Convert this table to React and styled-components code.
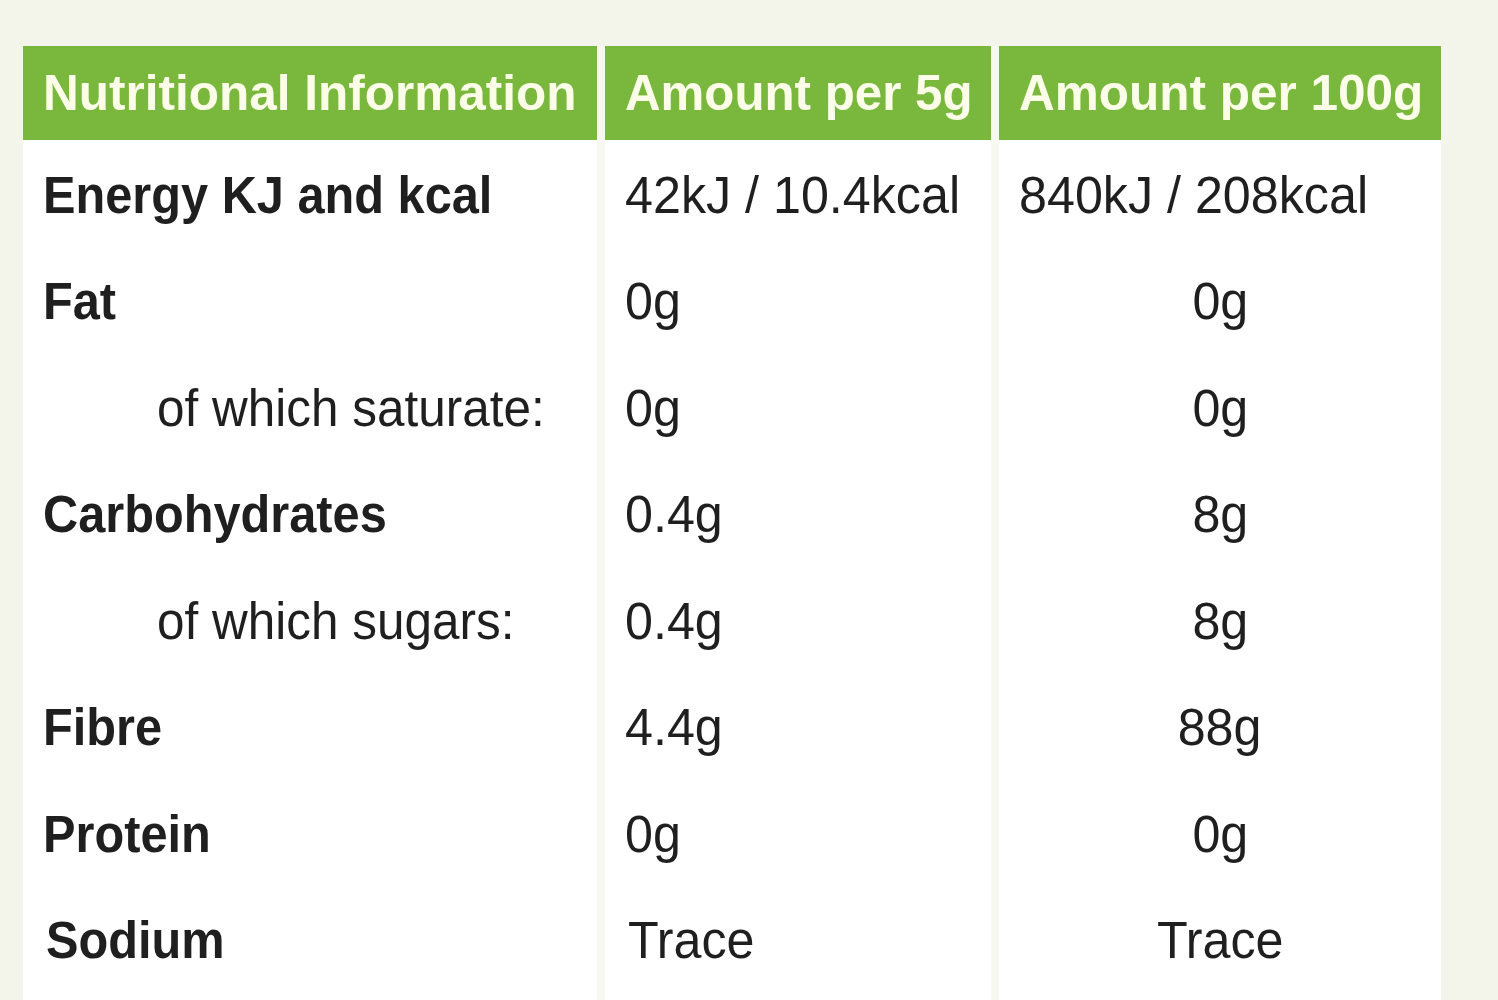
import React from "react";
import styled, { createGlobalStyle } from "styled-components";

const GlobalStyle = createGlobalStyle`
  html, body {
    margin: 0;
    padding: 0;
    background: #f3f4ea;
  }
  body {
    font-family: "Liberation Sans", Arial, sans-serif;
  }
`;

const Page = styled.div`
  width: 1498px;
  height: 1000px;
  overflow: hidden;
  padding: 46px 0 0 23px;
  box-sizing: border-box;
`;

const Table = styled.div`
  display: grid;
  grid-template-columns: 574px 386px 442px;
  grid-template-rows: 94px repeat(8, 106.5px) 40px;
  column-gap: 8px;
  width: 1418px;
  background: #f7f8f1;
`;

const HeadCell = styled.div`
  background: #7ab83d;
  color: #fbfde8;
  font-weight: 700;
  font-size: 50px;
  display: flex;
  align-items: center;
  padding-left: 20px;
  white-space: nowrap;
`;

const Cell = styled.div`
  background: #ffffff;
  color: #1f1f1f;
  font-size: 51px;
  font-weight: ${(p) => (p.$bold ? 700 : 400)};
  display: flex;
  align-items: center;
  justify-content: ${(p) => (p.$center ? "center" : "flex-start")};
  padding-left: ${(p) => (p.$center ? 0 : p.$indent ? 134 : 20 + (p.$nudge || 0))}px;
  padding-top: 4px;
  white-space: nowrap;
`;

const Text = styled.span`
  display: inline-block;
  transform: scaleX(${(p) => p.$squeeze || 1});
  transform-origin: ${(p) => (p.$center ? "center" : "left")} center;
`;

const rows = [
  { label: "Energy KJ and kcal", bold: true, a: "42kJ / 10.4kcal", b: "840kJ / 208kcal", left: true },
  { label: "Fat", bold: true, a: "0g", b: "0g" },
  { label: "of which saturate:", indent: true, a: "0g", b: "0g" },
  { label: "Carbohydrates", bold: true, a: "0.4g", b: "8g" },
  { label: "of which sugars:", indent: true, a: "0.4g", b: "8g" },
  { label: "Fibre", bold: true, a: "4.4g", b: "88g" },
  { label: "Protein", bold: true, a: "0g", b: "0g" },
  { label: "Sodium", bold: true, a: "Trace", b: "Trace", nudge: 3 },
];

const App = () => (
  <Page>
    <GlobalStyle />
    <Table>
      <HeadCell>
        <Text $squeeze={0.99}>Nutritional Information</Text>
      </HeadCell>
      <HeadCell>
        <Text $squeeze={0.985}>Amount per 5g</Text>
      </HeadCell>
      <HeadCell>
        <Text $squeeze={0.99}>Amount per 100g</Text>
      </HeadCell>
      {rows.map((r) => (
        <React.Fragment key={r.label}>
          <Cell $bold={r.bold} $indent={r.indent} $nudge={r.nudge}>
            <Text $squeeze={r.bold ? 0.955 : 0.97}>{r.label}</Text>
          </Cell>
          <Cell $nudge={r.nudge}>
            <Text $squeeze={0.985}>{r.a}</Text>
          </Cell>
          <Cell $center={!r.left}>
            <Text $squeeze={0.985} $center={!r.left}>
              {r.b}
            </Text>
          </Cell>
        </React.Fragment>
      ))}
      <Cell />
      <Cell />
      <Cell />
    </Table>
  </Page>
);

export default App;
